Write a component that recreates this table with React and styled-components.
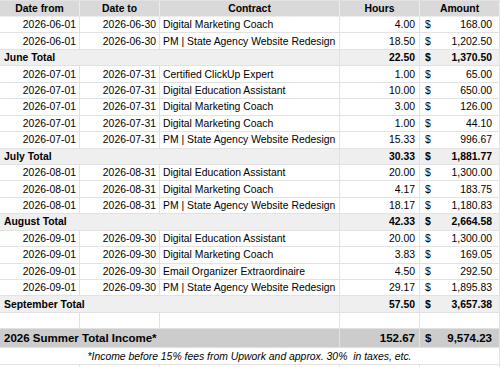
import React from "react";
import styled, { createGlobalStyle } from "styled-components";

const Global = createGlobalStyle`
  html, body { margin: 0; padding: 0; background: #fff; overflow: hidden; }
  body { font-family: "Liberation Sans", Arial, sans-serif; color: #000; }
`;

const Sheet = styled.div`
  width: 500px;
  height: 367px;
  overflow: hidden;
  border-top: 1px solid #e2e2e2;
  box-sizing: border-box;
`;

const Row = styled.div`
  display: grid;
  grid-template-columns: 80px 80px 180px 80px 80px;
  height: ${(p) => p.$h || 16.44}px;
  background: ${(p) => p.$bg || "#fff"};
  font-size: ${(p) => p.$fs || 10.4}px;
  font-weight: ${(p) => (p.$bold ? 700 : 400)};
`;

const Cell = styled.div`
  box-sizing: border-box;
  display: flex;
  align-items: center;
  justify-content: ${(p) => p.$align || "flex-start"};
  padding: 0 ${(p) => p.$pr ?? 3}px 0 ${(p) => p.$pl ?? 3}px;
  border-right: 1px solid ${(p) => p.$line || "#e2e2e2"};
  border-bottom: 1px solid ${(p) => p.$line || "#e2e2e2"};
  grid-column: span ${(p) => p.$span || 1};
  white-space: nowrap;
  overflow: hidden;
`;

const Money = styled(Cell)`
  justify-content: space-between;
  padding: 0 7px 0 5px;
`;

const Note = styled(Cell)`
  justify-content: center;
  font-style: italic;
  font-size: 10.4px;
`;

const months = [
  {
    label: "June Total",
    hours: "22.50",
    amount: "1,370.50",
    rows: [
      ["2026-06-01", "2026-06-30", "Digital Marketing Coach", "4.00", "168.00"],
      ["2026-06-01", "2026-06-30", "PM | State Agency Website Redesign", "18.50", "1,202.50"],
    ],
  },
  {
    label: "July Total",
    hours: "30.33",
    amount: "1,881.77",
    rows: [
      ["2026-07-01", "2026-07-31", "Certified ClickUp Expert", "1.00", "65.00"],
      ["2026-07-01", "2026-07-31", "Digital Education Assistant", "10.00", "650.00"],
      ["2026-07-01", "2026-07-31", "Digital Marketing Coach", "3.00", "126.00"],
      ["2026-07-01", "2026-07-31", "Digital Marketing Coach", "1.00", "44.10"],
      ["2026-07-01", "2026-07-31", "PM | State Agency Website Redesign", "15.33", "996.67"],
    ],
  },
  {
    label: "August Total",
    hours: "42.33",
    amount: "2,664.58",
    rows: [
      ["2026-08-01", "2026-08-31", "Digital Education Assistant", "20.00", "1,300.00"],
      ["2026-08-01", "2026-08-31", "Digital Marketing Coach", "4.17", "183.75"],
      ["2026-08-01", "2026-08-31", "PM | State Agency Website Redesign", "18.17", "1,180.83"],
    ],
  },
  {
    label: "September Total",
    hours: "57.50",
    amount: "3,657.38",
    rows: [
      ["2026-09-01", "2026-09-30", "Digital Education Assistant", "20.00", "1,300.00"],
      ["2026-09-01", "2026-09-30", "Digital Marketing Coach", "3.83", "169.05"],
      ["2026-09-01", "2026-09-30", "Email Organizer Extraordinaire", "4.50", "292.50"],
      ["2026-09-01", "2026-09-30", "PM | State Agency Website Redesign", "29.17", "1,895.83"],
    ],
  },
];

function DataRow({ r }) {
  return (
    <Row>
      <Cell $align="flex-end">{r[0]}</Cell>
      <Cell $align="flex-end">{r[1]}</Cell>
      <Cell>{r[2]}</Cell>
      <Cell $align="flex-end" $pr={4}>{r[3]}</Cell>
      <Money>
        <span>$</span>
        <span>{r[4]}</span>
      </Money>
    </Row>
  );
}

function BlankRow() {
  return (
    <Row>
      <Cell />
      <Cell />
      <Cell />
      <Cell />
      <Cell />
    </Row>
  );
}

function TotalRow({ label, hours, amount, bg, h, fs }) {
  return (
    <Row $bg={bg} $bold $h={h} $fs={fs}>
      <Cell $span={3} $pl={4}>{label}</Cell>
      <Cell $align="flex-end" $pr={4}>{hours}</Cell>
      <Money>
        <span>$</span>
        <span>{amount}</span>
      </Money>
    </Row>
  );
}

export default function App() {
  return (
    <>
      <Global />
      <Sheet>
        <Row $bg="#d9d9d9" $bold $h={16}>
          <Cell $align="center" $line="#ececec">Date from</Cell>
          <Cell $align="center" $line="#ececec">Date to</Cell>
          <Cell $align="center" $line="#ececec">Contract</Cell>
          <Cell $align="center" $line="#ececec">Hours</Cell>
          <Cell $align="center" $line="#ececec">Amount</Cell>
        </Row>
        {months.map((m) => (
          <React.Fragment key={m.label}>
            {m.rows.map((r, i) => (
              <DataRow key={i} r={r} />
            ))}
            <TotalRow label={m.label} hours={m.hours} amount={m.amount} bg="#efefef" />
          </React.Fragment>
        ))}
        <BlankRow />
        <TotalRow
          label="2026 Summer Total Income*"
          hours="152.67"
          amount="9,574.23"
          bg="#cccccc"
          h={19}
          fs={11.5}
        />
        <Row $h={17}>
          <Note $span={5}>*Income before 15% fees from Upwork and approx. 30%&nbsp;&nbsp;in taxes, etc.</Note>
        </Row>
        <BlankRow />
      </Sheet>
    </>
  );
}
